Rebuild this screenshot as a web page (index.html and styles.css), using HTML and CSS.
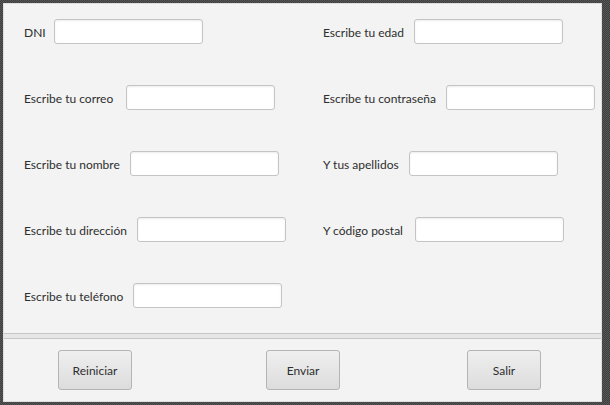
FILE: index.html
```html
<!DOCTYPE html>
<html lang="es">
<head>
<meta charset="utf-8">
<title>Formulario</title>
<link rel="stylesheet" href="styles.css">
</head>
<body>
<div class="window">
  <div class="form">
    <div class="field"><label class="narrow">DNI</label><input type="text"></div>
    <div class="field"><label>Escribe tu edad</label><input type="text"></div>
    <div class="field"><label class="wide">Escribe tu correo</label><input type="text"></div>
    <div class="field"><label>Escribe tu contraseña</label><input type="text"></div>
    <div class="field"><label>Escribe tu nombre</label><input type="text"></div>
    <div class="field"><label>Y tus apellidos</label><input type="text"></div>
    <div class="field"><label>Escribe tu dirección</label><input type="text"></div>
    <div class="field"><label class="loose">Y código postal</label><input type="text"></div>
    <div class="field"><label>Escribe tu teléfono</label><input type="text"></div>
  </div>
  <div class="separator"></div>
  <div class="actions">
    <button class="btn btn-reset">Reiniciar</button>
    <button class="btn btn-send">Enviar</button>
    <button class="btn btn-exit">Salir</button>
  </div>
</div>
</body>
</html>
```

FILE: styles.css
```css
html, body {
  margin: 0;
  padding: 0;
}
body {
  width: 610px;
  height: 405px;
  overflow: hidden;
  background-color: #4a4a4a;
  background-image: repeating-conic-gradient(#3e3e3e 0 25%, #575757 0 50%);
  background-size: 2px 2px;
  font-family: "Lato", "Liberation Sans", sans-serif;
  font-size: 12px;
  color: #2e2e2e;
}
.window {
  box-sizing: border-box;
  margin: 3px 0 0 3px;
  width: 599px;
  height: 399px;
  border: 1px solid #dedede;
  background: #f3f3f3;
  display: flex;
  flex-direction: column;
}
.form {
  height: 329px;
  box-sizing: border-box;
  padding-top: 15px;
  display: grid;
  grid-template-columns: 299px 1fr;
  grid-auto-rows: 25px;
  row-gap: 41px;
  align-content: start;
}
.field {
  display: flex;
  align-items: center;
  gap: 10px;
  padding-left: 20px;
}
.field label {
  white-space: nowrap;
  line-height: 25px;
  padding-top: 1px;
}
.field label.wide {
  margin-right: 3px;
}
.field label.narrow {
  margin-right: -2px;
}
.field label.loose {
  margin-right: 2px;
}
.field input {
  box-sizing: border-box;
  width: 149px;
  height: 25px;
  margin: 0;
  padding: 0 6px;
  border: 1px solid #c4c4c4;
  border-radius: 3px;
  background: #ffffff;
  box-shadow: inset 0 1px 2px rgba(0, 0, 0, 0.08);
  font: inherit;
  outline: none;
}
.separator {
  box-sizing: border-box;
  height: 6px;
  border-top: 1px solid #c6c6c6;
  border-bottom: 1px solid #c6c6c6;
  background: #e6e6e6;
}
.actions {
  display: flex;
  align-items: flex-start;
  padding: 11px 0 0 54px;
}
.btn {
  box-sizing: border-box;
  width: 74px;
  height: 40px;
  margin: 0;
  padding: 0;
  border: 1px solid #b4b4b4;
  border-radius: 3px;
  background: linear-gradient(#efefef, #dcdcdc);
  font: inherit;
  font-size: 12px;
  color: #2e2e2e;
}
.btn-send {
  margin-left: 134px;
}
.btn-exit {
  margin-left: 127px;
}
```
